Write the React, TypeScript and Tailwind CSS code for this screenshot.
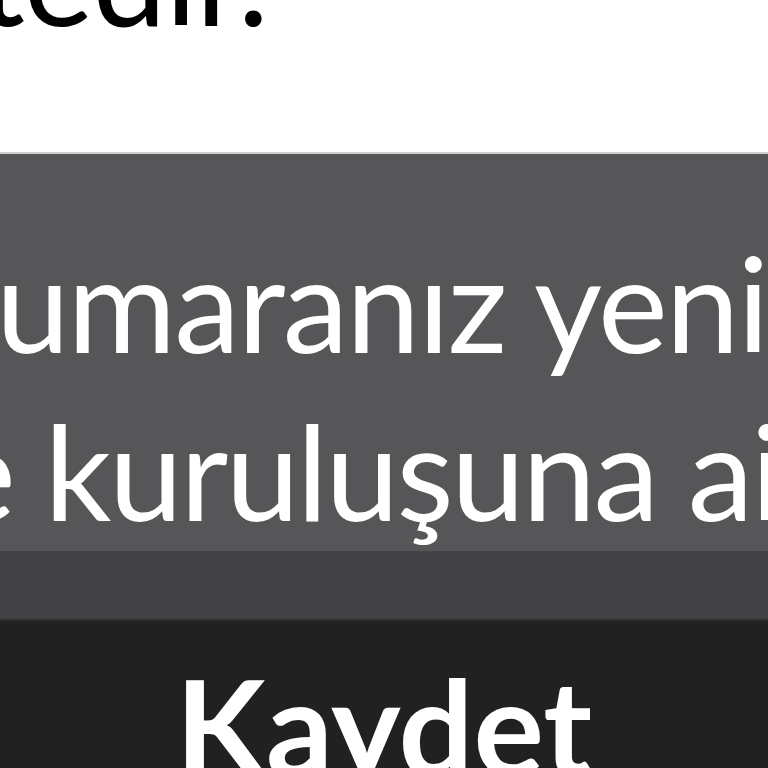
export default function App() {
  return (
    <div
      className="w-[768px] h-[768px] overflow-hidden bg-white flex flex-col"
      style={{ fontFamily: "Lato, 'Open Sans', sans-serif" }}
    >
      {/* Top text, cropped */}
      <div className="h-[154px] shrink-0 bg-white border-b-2 border-[#cfcfcf]">
        <div className="w-[268px] -mt-[91px] flex justify-end overflow-hidden">
          <span className="whitespace-nowrap text-[132px] leading-none tracking-[-1px] text-black">
            gerekmektedir.
          </span>
        </div>
      </div>

      {/* Message panel */}
      <div className="h-[397px] shrink-0 bg-[#565658] pt-[64px] overflow-hidden">
        <div className="whitespace-nowrap text-[132px] leading-[168px] tracking-[-2px] text-white -ml-[4px]">
          umaranız yeni bir
        </div>
        <div className="whitespace-nowrap text-[132px] leading-[168px] tracking-[-2.5px] text-white -ml-[54px]">
          e kuruluşuna ait
        </div>
      </div>

      {/* Spacer strip */}
      <div className="h-[70px] shrink-0 bg-[#434345] border-b-2 border-[#2e2e2e]" />

      {/* Save button */}
      <div className="flex-1 bg-[#212121] flex justify-center pt-[38px]">
        <span className="whitespace-nowrap text-[132px] leading-none font-bold text-white">
          Kaydet
        </span>
      </div>
    </div>
  );
}
